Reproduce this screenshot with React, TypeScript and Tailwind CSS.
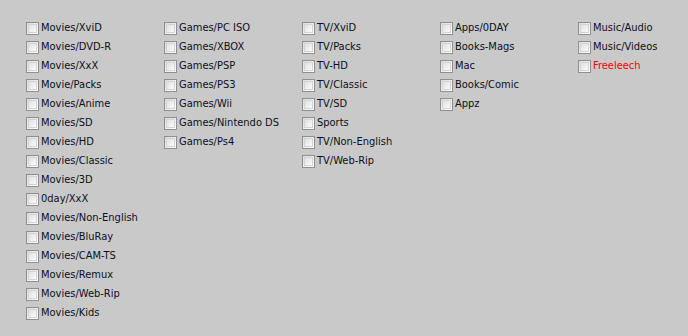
import React from "react";

type Item = { label: string; red?: boolean };

const columns: Item[][] = [
  [
    "Movies/XviD",
    "Movies/DVD-R",
    "Movies/XxX",
    "Movie/Packs",
    "Movies/Anime",
    "Movies/SD",
    "Movies/HD",
    "Movies/Classic",
    "Movies/3D",
    "0day/XxX",
    "Movies/Non-English",
    "Movies/BluRay",
    "Movies/CAM-TS",
    "Movies/Remux",
    "Movies/Web-Rip",
    "Movies/Kids",
  ].map((label) => ({ label })),
  [
    "Games/PC ISO",
    "Games/XBOX",
    "Games/PSP",
    "Games/PS3",
    "Games/Wii",
    "Games/Nintendo DS",
    "Games/Ps4",
  ].map((label) => ({ label })),
  ["TV/XviD", "TV/Packs", "TV-HD", "TV/Classic", "TV/SD", "Sports", "TV/Non-English", "TV/Web-Rip"].map(
    (label) => ({ label })
  ),
  ["Apps/0DAY", "Books-Mags", "Mac", "Books/Comic", "Appz"].map((label) => ({ label })),
  [{ label: "Music/Audio" }, { label: "Music/Videos" }, { label: "Freeleech", red: true }],
];

function Box() {
  return (
    <span className="box-border h-[13px] w-[13px] shrink-0 border border-[#8e8f8f] bg-gradient-to-br from-[#dcdcdc] to-[#ffffff] p-px">
      <span className="block h-full w-full border border-[#d4d4d4] bg-gradient-to-br from-[#e0e0e0] to-[#fbfbfb]" />
    </span>
  );
}

export default function App() {
  return (
    <div className="h-[336px] w-[688px] bg-[#c9c9c9] pl-[26px] pt-[19px] font-['DejaVu_Sans_Condensed',sans-serif] text-[11px] text-[#0b1020]">
      <div className="grid grid-cols-[138px_138px_138px_138px_138px]">
        {columns.map((col, i) => (
          <div key={i} className="flex flex-col">
            {col.map((item) => (
              <label key={item.label} className="flex h-[19px] items-center gap-[2px]">
                <Box />
                <span className={item.red ? "text-[#ff0000]" : ""}>{item.label}</span>
              </label>
            ))}
          </div>
        ))}
      </div>
    </div>
  );
}
